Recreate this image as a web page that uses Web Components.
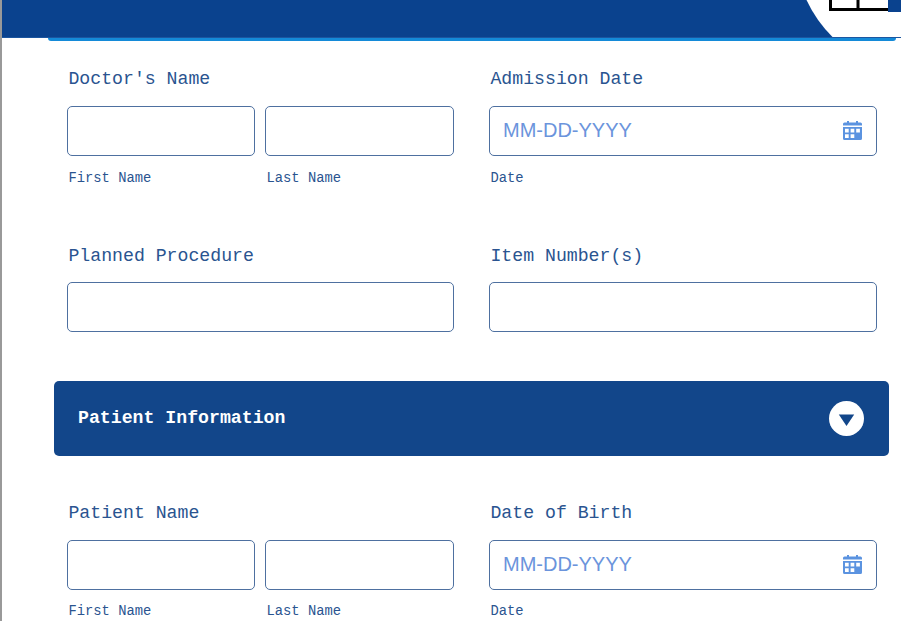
<!DOCTYPE html>
<html lang="en">
<head>
<meta charset="utf-8">
<title>Admission Form</title>
<style>
    html, body {
        margin: 0;
        height: 100%;
        overflow: hidden;
        background: #fff;
    }
</style>
</head>
<body>
<admission-page>
    <form-header slot="header"></form-header>
    <form-row class="doctor">
        <form-field label="Doctor's Name">
            <text-box class="first" hint="First Name"></text-box>
            <text-box hint="Last Name"></text-box>
        </form-field>
        <form-field label="Admission Date">
            <date-box hint="Date"></date-box>
        </form-field>
    </form-row>
    <form-row class="procedure">
        <form-field label="Planned Procedure"><text-box></text-box></form-field>
        <form-field label="Item Number(s)"><text-box></text-box></form-field>
    </form-row>
    <section-bar>Patient Information</section-bar>
    <form-row class="patient">
        <form-field label="Patient Name">
            <text-box class="first" hint="First Name"></text-box>
            <text-box hint="Last Name"></text-box>
        </form-field>
        <form-field label="Date of Birth">
            <date-box hint="Date"></date-box>
        </form-field>
    </form-row>
</admission-page>

<script>
class AdmissionPage extends HTMLElement {
    constructor() {
        super();
        this.attachShadow({ mode: 'open' }).innerHTML = `
            <style>
                :host {
                    display: block;
                    box-sizing: border-box;
                    height: 621px;
                    overflow: hidden;
                    border-left: 2px solid #999;
                    background: #fff;
                    color: #2a5490;
                    font-family: "Liberation Mono", monospace;
                }
                .sheet {
                    padding: 26px 12px 0 52px;
                }
                ::slotted(.doctor) { --hint-gap: 14px; }
                ::slotted(.procedure) { height: 138px; --label-top: 2px; }
                ::slotted(.patient) { margin-top: 45px; }
            </style>
            <slot name="header"></slot>
            <div class="sheet"><slot></slot></div>
        `;
    }
}

class FormHeader extends HTMLElement {
    constructor() {
        super();
        this.attachShadow({ mode: 'open' }).innerHTML = `
            <style>
                :host { display: block; height: 41px; }
                .banner {
                    display: flex;
                    justify-content: flex-end;
                    box-sizing: border-box;
                    height: 38px;
                    background: #0a428e;
                    border-bottom: 1px solid #1c56a0;
                }
                svg { display: block; }
                .strip {
                    height: 3px;
                    margin: 0 5px 0 46px;
                    background: #148ad8;
                    border-radius: 0 0 5px 5px;
                }
            </style>
            <div class="banner">
                <svg width="101" height="37" viewBox="0 0 101 37">
                    <path d="M6.5 0Q16 20.500 32.500 37H101V0Z" fill="#fff"/>
                    <path d="M30.500 0V9.500H88M58 0V9.500" fill="none" stroke="#000" stroke-width="3"/>
                    <path d="M88 0H101V12H88Z" fill="#0a428e"/>
                </svg>
            </div>
            <div class="strip"></div>
        `;
    }
}

class FormRow extends HTMLElement {
    constructor() {
        super();
        this.attachShadow({ mode: 'open' }).innerHTML = `
            <style>
                :host {
                    display: grid;
                    grid-template-columns: 387px 388px;
                    column-gap: 35px;
                    height: 176px;
                    margin-left: 13px;
                }
            </style>
            <slot></slot>
        `;
    }
}

class FormField extends HTMLElement {
    constructor() {
        super();
        this.attachShadow({ mode: 'open' }).innerHTML = `
            <style>
                :host { display: block; }
                .label {
                    height: 39px;
                    padding: var(--label-top, 1px) 0 0 1.4px;
                    font-size: 18.2px;
                    line-height: 22px;
                    white-space: nowrap;
                    box-sizing: border-box;
                }
                .inputs { display: flex; gap: 10px; }
                ::slotted(*) { flex: 1; min-width: 0; }
                ::slotted(.first) { flex: 0 0 188px; }
            </style>
            <div class="label">${this.getAttribute('label')}</div>
            <div class="inputs"><slot></slot></div>
        `;
    }
}

const boxStyle = `
    :host { display: block; }
    .box {
        display: flex;
        align-items: center;
        justify-content: space-between;
        box-sizing: border-box;
        height: 50px;
        border: 1px solid #4e70a0;
        border-radius: 5px;
        background: #fff;
    }
    .hint {
        margin-top: var(--hint-gap, 13px);
        padding-left: 1.5px;
        font-size: 13.8px;
        line-height: 18px;
        white-space: nowrap;
    }
`;

class TextBox extends HTMLElement {
    constructor() {
        super();
        const hint = this.getAttribute('hint');
        this.attachShadow({ mode: 'open' }).innerHTML = `
            <style>${boxStyle}</style>
            <div class="box"></div>
            ${hint ? `<div class="hint">${hint}</div>` : ''}
        `;
    }
}

class DateBox extends HTMLElement {
    constructor() {
        super();
        this.attachShadow({ mode: 'open' }).innerHTML = `
            <style>
                ${boxStyle}
                .box { padding: 0 14px 0 13px; }
                .format {
                    margin-top: -2px;
                    color: #6b94dc;
                    font: 20px/24px "Liberation Sans", Arial, sans-serif;
                }
                svg { margin-bottom: 1px; }
            </style>
            <div class="box">
                <span class="format">MM-DD-YYYY</span>
                <svg width="19" height="19" viewBox="0 0 19 19" fill="#5b93e0">
                    <path d="M1.500 1.500H4V0H6V1.500H13V0H15V1.500H17.500Q19 1.500 19 3V4.500H0V3Q0 1.500 1.500 1.500Z"/>
                    <path fill-rule="evenodd" d="M0 6H19V17.500Q19 19 17.500 19H1.500Q0 19 0 17.500ZM2 7.700V11.500H5.700V7.700ZM7.600 7.700V11.500H11.300V7.700ZM13.200 7.700V11.500H16.900V7.700ZM2 13.200V17H5.700V13.200ZM7.600 13.200V17H11.300V13.200Z"/>
                </svg>
            </div>
            <div class="hint">${this.getAttribute('hint')}</div>
        `;
    }
}

class SectionBar extends HTMLElement {
    constructor() {
        super();
        this.attachShadow({ mode: 'open' }).innerHTML = `
            <style>
                :host {
                    display: flex;
                    align-items: center;
                    justify-content: space-between;
                    box-sizing: border-box;
                    height: 75px;
                    padding: 0 25px 0 24px;
                    border-radius: 5px;
                    background: #12468a;
                    color: #fff;
                    font-size: 18.2px;
                    font-weight: bold;
                }
                span { padding-bottom: 2px; }
                svg { display: block; }
            </style>
            <span><slot></slot></span>
            <svg width="35" height="35" viewBox="0 0 35 35">
                <circle cx="17.500" cy="17.500" r="17.500" fill="#fff"/>
                <path d="M9.800 13.500H25.200L17.500 25Z" fill="#12468a"/>
            </svg>
        `;
    }
}

customElements.define('admission-page', AdmissionPage);
customElements.define('form-header', FormHeader);
customElements.define('form-row', FormRow);
customElements.define('form-field', FormField);
customElements.define('text-box', TextBox);
customElements.define('date-box', DateBox);
customElements.define('section-bar', SectionBar);
</script>
</body>
</html>
